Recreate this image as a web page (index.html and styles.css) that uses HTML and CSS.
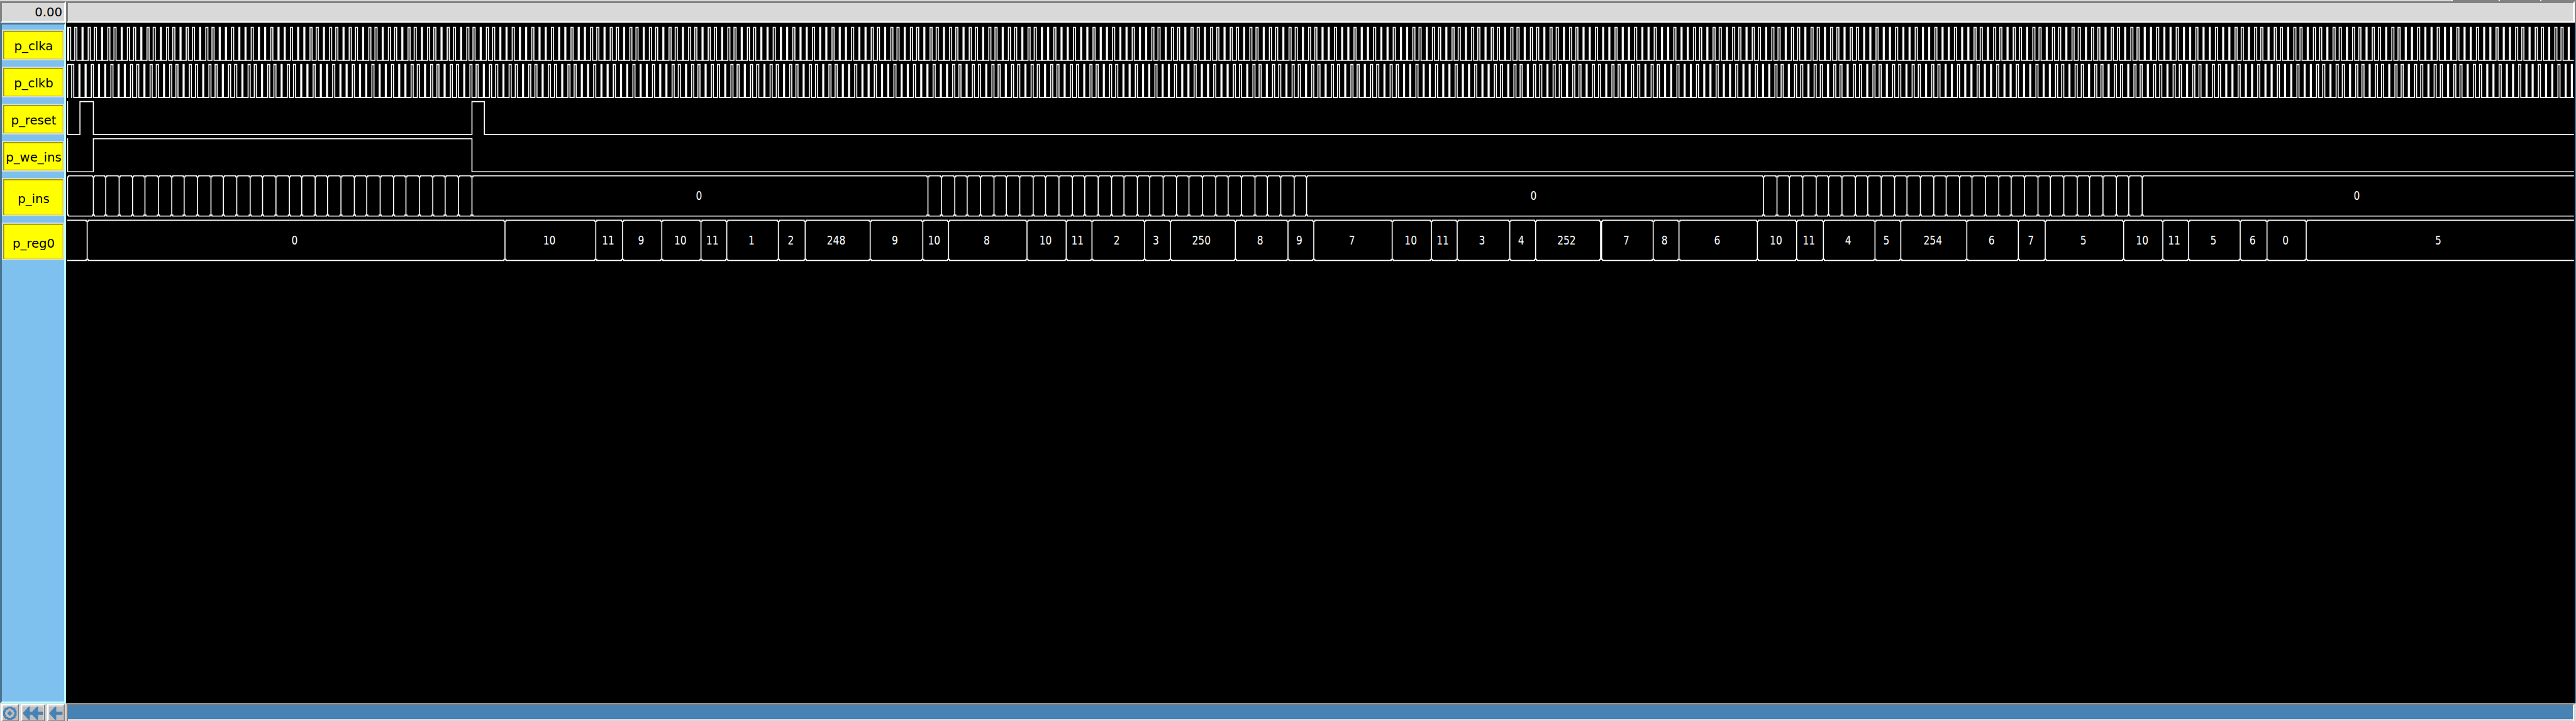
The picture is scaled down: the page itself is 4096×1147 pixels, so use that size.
FILE: index.html
```html
<!DOCTYPE html>
<html lang="en">
<head>
<meta charset="utf-8">
<title>Waveform viewer</title>
<link rel="stylesheet" href="styles.css">
</head>
<body>
<div class="viewer">
  <div class="top-strip">
    <i class="tab tab-a"></i><i class="tab tab-b"></i><i class="tab tab-c"></i>
  </div>
  <header class="header">
    <div class="time">0.00</div>
    <div class="ruler"></div>
    <div class="header-edge"></div>
  </header>
  <main class="main">
    <div class="signals">
      <div class="signal">p_clka</div>
      <div class="signal">p_clkb</div>
      <div class="signal">p_reset</div>
      <div class="signal">p_we_ins</div>
      <div class="signal bus">p_ins</div>
      <div class="signal bus">p_reg0</div>
    </div>
    <svg class="plot" viewBox="64.01 21.94 2431.78 660" preserveAspectRatio="none">
      <path id="waves" class="wave"/>
      <g id="values" class="values"></g>
    </svg>
    <div class="plot-edge"></div>
  </main>
  <footer class="footer">
    <div class="buttons">
      <div class="button">
        <svg class="icon" viewBox="0 0 13 13">
          <path fill-rule="evenodd" d="M4 0H9V1H11V2H12V4H13V9H12V11H11V12H9V13H4V12H2V11H1V9H0V4H1V2H2V1H4ZM5 2V3H3V5H2V8H3V10H5V11H8V10H10V8H11V5H10V3H8V2Z"/>
          <path d="M6 4H7V5H8V6H9V7H8V8H7V9H6V8H5V7H4V6H5V5H6Z"/>
        </svg>
      </div>
      <div class="button button-wide">
        <svg class="icon icon-wide" viewBox="0 0 20 13">
          <path d="M0 6.5L6 0H7V5H9.2L14 0H15V5H20V8H15V13H14L9.2 8H7V13H6Z"/>
        </svg>
      </div>
      <div class="button">
        <svg class="icon" viewBox="0 0 13 13">
          <path d="M0 6.5L6 0H7V5H13V8H7V13H6Z"/>
        </svg>
      </div>
    </div>
    <div class="scrollbar"><div class="thumb"></div></div>
  </footer>
</div>
<script src="waves.js"></script>
</body>
</html>
```
FILE: styles.css
```css
* { box-sizing: border-box; }

body {
  margin: 0;
  background: #d9d9d9;
  font-family: "DejaVu Sans", "Liberation Sans", sans-serif;
  color: #000;
}

.viewer {
  display: grid;
  grid-template-rows: 2px 34px 1083px 28px;
  width: 4096px;
  height: 1147px;
  overflow: hidden;
}

.top-strip {
  display: flex;
  justify-content: flex-end;
  background: #d9d9d9;
}
.tab {
  background: #828282;
  border-left: 2px solid #fff;
}
.tab-a { width: 75px; }
.tab-b { width: 66px; }
.tab-c { width: 57px; }

.header {
  display: grid;
  grid-template-columns: 105px 3989px 2px;
}
.time,
.ruler {
  border: 3px solid;
  border-color: #828282 #fff #fff #828282;
  background: #d9d9d9;
}
.time {
  padding-right: 3px;
  font-size: 19.7px;
  line-height: 29px;
  text-align: right;
}
.header-edge { background: #828282; }

.main {
  display: grid;
  grid-template-columns: 105px 3989px 2px;
}
.signals {
  display: flex;
  flex-direction: column;
  gap: 9.84px;
  padding-top: 8px;
  background: #7ec0ee;
  border: 3px solid;
  border-color: #4c738f #bdffff #bdffff #4c738f;
}
.signal {
  flex: none;
  height: 49.22px;
  padding: 3px 0 0 2px;
  border: 2px solid #d9d9d9;
  background: #ff0;
  box-shadow: inset 1.64px 1.64px #999900, inset -1.64px -1.64px #e5e500;
  font-size: 19.7px;
  line-height: 44px;
  text-align: center;
  white-space: nowrap;
}
.signal.bus {
  height: 60.7px;
  line-height: 57px;
}
.plot {
  display: block;
  width: 3989px;
  height: 1083px;
  background: #000;
}
.wave { fill: #fff; }
.values {
  fill: #fff;
  font-family: "DejaVu Sans", sans-serif;
  font-size: 12.35px;
  text-anchor: middle;
}
.plot-edge { background: #4c738f; }

.footer {
  display: flex;
  padding: 1px 3px 0 2px;
  gap: 3px;
  background: #d9d9d9;
}
.buttons {
  display: flex;
  gap: 3px;
  width: 101px;
}
.button {
  flex: none;
  width: 28px;
  height: 28px;
  padding: 1.5px 1.3px;
  background: #d9d9d9;
  border: 2px solid;
  border-color: #fff #828282 #828282 #fff;
}
.button-wide { width: 39px; }
.icon {
  display: block;
  width: 21.3px;
  height: 21.3px;
  background: #bebebe;
  fill: #4682b4;
}
.icon-wide { width: 32.6px; }
.scrollbar {
  flex: 1;
  height: 28px;
  border: solid;
  border-width: 2px 2px 0 2px;
  border-color: #828282 #fff #828282 #828282;
}
.thumb {
  height: 21.5px;
  background: #4682b4;
}
```
FILE: waves.js
```js
const LEFT = 65;
const RIGHT = 2495;
const PERIOD = 6.3254;
let d = "";

function rect(x0, y0, x1, y1) {
  d += `M${x0} ${y0}H${x1}V${y1}H${x0}Z`;
}

// One-bit trace: edges are [x, newLevel] pairs, starting from the level at LEFT.
function bit(top, level, edges) {
  let x = LEFT;
  for (const [at, next] of edges.concat([[RIGHT, null]])) {
    const y = level ? top : top + 32;
    const end = next === null ? RIGHT : at + 1;
    rect(x, y, end, y + 1);
    if (next !== null) rect(at, top, at + 1, top + 33);
    x = at;
    level = next;
  }
}

function clock(top, rise, fall, first) {
  const edges = [];
  for (let n = first; n < 400; n++) {
    const r = Math.floor(rise + n * PERIOD);
    const f = Math.floor(fall + n * PERIOD);
    if (r >= LEFT && r < RIGHT) edges.push([r, 1]);
    if (f >= LEFT && f < RIGHT) edges.push([f, 0]);
  }
  bit(top, 1, edges);
  rect(LEFT, top, LEFT + 1, top + 33);
}

// Multi-bit trace: rails broken at every value change.
function bus(top, changes) {
  let x = LEFT;
  for (const c of changes.concat([RIGHT])) {
    if (c > x) {
      rect(x, top, c, top + 1);
      rect(x, top + 39, c, top + 40);
    }
    if (c < RIGHT) {
      rect(c, top + 1, c + 1, top + 39);
      rect(Math.max(c - 1, LEFT), top + 1, c + 2, top + 2);
      rect(Math.max(c - 1, LEFT), top + 38, c + 2, top + 39);
    }
    x = c + 1;
  }
}

clock(26, 72.96, 74.5, -1);
clock(62, 69.735, 71.27, -1);

bit(98, 0, [[77, 1], [90, 0], [457, 1], [469, 0]]);
rect(LEFT, 98, LEFT + 1, 131);
bit(134, 0, [[90, 1], [457, 0]]);
rect(LEFT, 134, LEFT + 1, 167);

const insChanges = [LEFT];
for (const [from, to] of [[0, 29], [64, 93], [128, 157]]) {
  for (let n = from; n <= to; n++) {
    insChanges.push(Math.floor(90.25 + n * 2 * PERIOD));
  }
}
bus(170, insChanges);

const regChanges = [
  84, 489, 577, 603, 641, 679, 704, 754, 780, 843, 894, 919, 995, 1033, 1058,
  1109, 1134, 1197, 1248, 1273, 1349, 1387, 1412, 1463, 1488, 1551, 1552, 1602,
  1627, 1703, 1741, 1767, 1817, 1842, 1906, 1956, 1982, 2058, 2096, 2121, 2171,
  2197, 2235
];
const regValues = [
  "0", "10", "11", "9", "10", "11", "1", "2", "248", "9", "10", "8", "10",
  "11", "2", "3", "250", "8", "9", "7", "10", "11", "3", "4", "252", "", "7",
  "8", "6", "10", "11", "4", "5", "254", "6", "7", "5", "10", "11", "5", "6",
  "0", "5"
];
bus(213, regChanges);
document.getElementById("waves").setAttribute("d", d);

const values = document.getElementById("values");
function label(text, from, to, baseline) {
  if (!text) return;
  const t = document.createElementNS("http://www.w3.org/2000/svg", "text");
  const centre = Math.floor((from + to) / 2) - 0.5;
  t.setAttribute("transform", `translate(${centre} ${baseline}) scale(0.764 1)`);
  t.textContent = text;
  values.appendChild(t);
}
label("0", 457, 899, 194);
label("0", 1266, 1709, 194);
label("0", 2076, RIGHT - 1, 194);
regValues.forEach((v, i) => label(v, regChanges[i], regChanges[i + 1] || RIGHT - 2, 237));
```
